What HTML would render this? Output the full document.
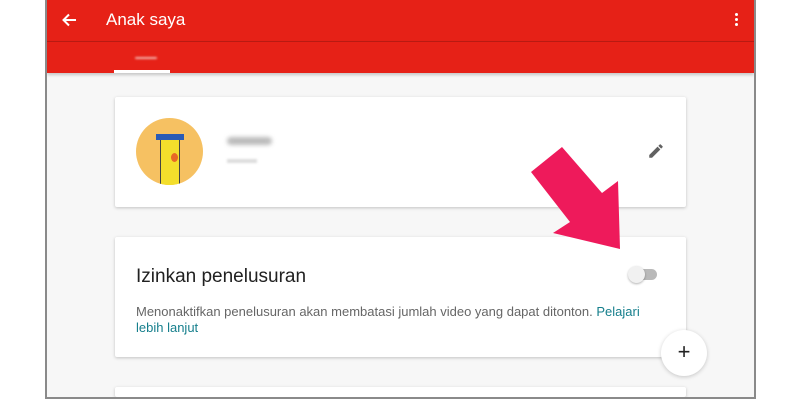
<!DOCTYPE html>
<html><head><style>
*{margin:0;padding:0;box-sizing:border-box}
html,body{width:800px;height:400px;overflow:hidden}
body{background:#fff;position:relative;font-family:"Liberation Sans",sans-serif}
.frame{position:absolute;left:45px;top:0;width:711px;height:399px;border:2px solid #8a8a8a;border-top:none;background:#f7f7f7;overflow:hidden}
.bar{position:absolute;left:0;top:0;width:100%;height:41px;background:#e62117}
.tabs{position:absolute;left:0;top:41px;width:100%;height:32px;background:#e62117;border-top:1px solid #b81a12;box-shadow:0 2px 3px rgba(0,0,0,.2)}
.card{position:absolute;left:68px;width:571px;background:#fff;border-radius:2px;box-shadow:0 1px 3px rgba(0,0,0,.22)}
</style></head><body>
<div class="frame">
 <div class="bar">
  <svg style="position:absolute;left:14px;top:12px" width="16" height="16" viewBox="0 0 16 16"><path d="M15 8H3M8 2.5L2.5 8 8 13.5" stroke="#fff" stroke-width="2" fill="none"/></svg>
  <div style="position:absolute;left:59px;top:10px;color:#fff;font-size:17px">Anak saya</div>
  <div style="position:absolute;right:15px;top:13px;width:4px">
   <div style="width:3px;height:3px;background:#fff;border-radius:50%;margin-bottom:2px"></div>
   <div style="width:3px;height:3px;background:#fff;border-radius:50%;margin-bottom:2px"></div>
   <div style="width:3px;height:3px;background:#fff;border-radius:50%"></div></div>
 </div>
 <div class="tabs">
  <div style="position:absolute;left:88px;top:15px;width:22px;height:2px;background:#f4b3ae;border-radius:2px;filter:blur(1px)"></div>
  <div style="position:absolute;left:67px;top:28px;width:56px;height:3px;background:#fff"></div>
 </div>
 <div class="card" style="top:97px;height:110px">
  <div style="position:absolute;left:21px;top:21px;width:67px;height:67px;border-radius:50%;background:#f6c162;overflow:hidden">
   <div style="position:absolute;left:24px;top:18px;width:20px;height:55px;background:#f3de2c;border:1px solid #444"></div>
   <div style="position:absolute;left:20px;top:16px;width:28px;height:6px;background:#2a5bb5"></div>
   <div style="position:absolute;left:35px;top:35px;width:7px;height:9px;background:#e86a26;border-radius:50%"></div>
  </div>
  <div style="position:absolute;left:112px;top:40px;width:45px;height:8px;background:#bbb;border-radius:4px;filter:blur(2px)"></div>
  <div style="position:absolute;left:112px;top:62px;width:30px;height:4px;background:#ddd;filter:blur(1px)"></div>
  <svg style="position:absolute;left:532px;top:45px" width="18" height="18" viewBox="0 0 24 24"><path d="M3 17.25V21h3.75L17.81 9.94l-3.75-3.75L3 17.25zM20.71 7.04a1 1 0 000-1.41l-2.34-2.34a1 1 0 00-1.41 0l-1.83 1.83 3.75 3.75 1.83-1.83z" fill="#616161"/></svg>
 </div>
 <div class="card" style="top:237px;height:120px">
  <div style="position:absolute;left:21px;top:29px;font-size:19px;color:#212121">Izinkan penelusuran</div>
  <div style="position:absolute;left:518px;top:32px;width:24px;height:11px;border-radius:6px;background:#b9b9b9"></div>
  <div style="position:absolute;left:513px;top:29px;width:17px;height:17px;border-radius:50%;background:#f1f1f1;box-shadow:0 1px 2px rgba(0,0,0,.3)"></div>
  <div style="position:absolute;left:21px;top:67px;width:525px;font-size:13px;line-height:16px;color:#666">Menonaktifkan penelusuran akan membatasi jumlah video yang dapat ditonton. <span style="color:#167f8c">Pelajari lebih lanjut</span></div>
 </div>
 <div class="card" style="top:387px;height:10px"></div>
 <div style="position:absolute;left:614px;top:330px;width:46px;height:46px;border-radius:50%;background:#fff;box-shadow:0 1px 4px rgba(0,0,0,.2);text-align:center;line-height:44px;font-size:22px;color:#222">+</div>
</div>
<svg style="position:absolute;left:0;top:0" width="800" height="400"><polygon points="562,147 531,172 570,222 553,233 620,249 618,181 602,193" fill="#ee1a5b"/></svg>
</body></html>
